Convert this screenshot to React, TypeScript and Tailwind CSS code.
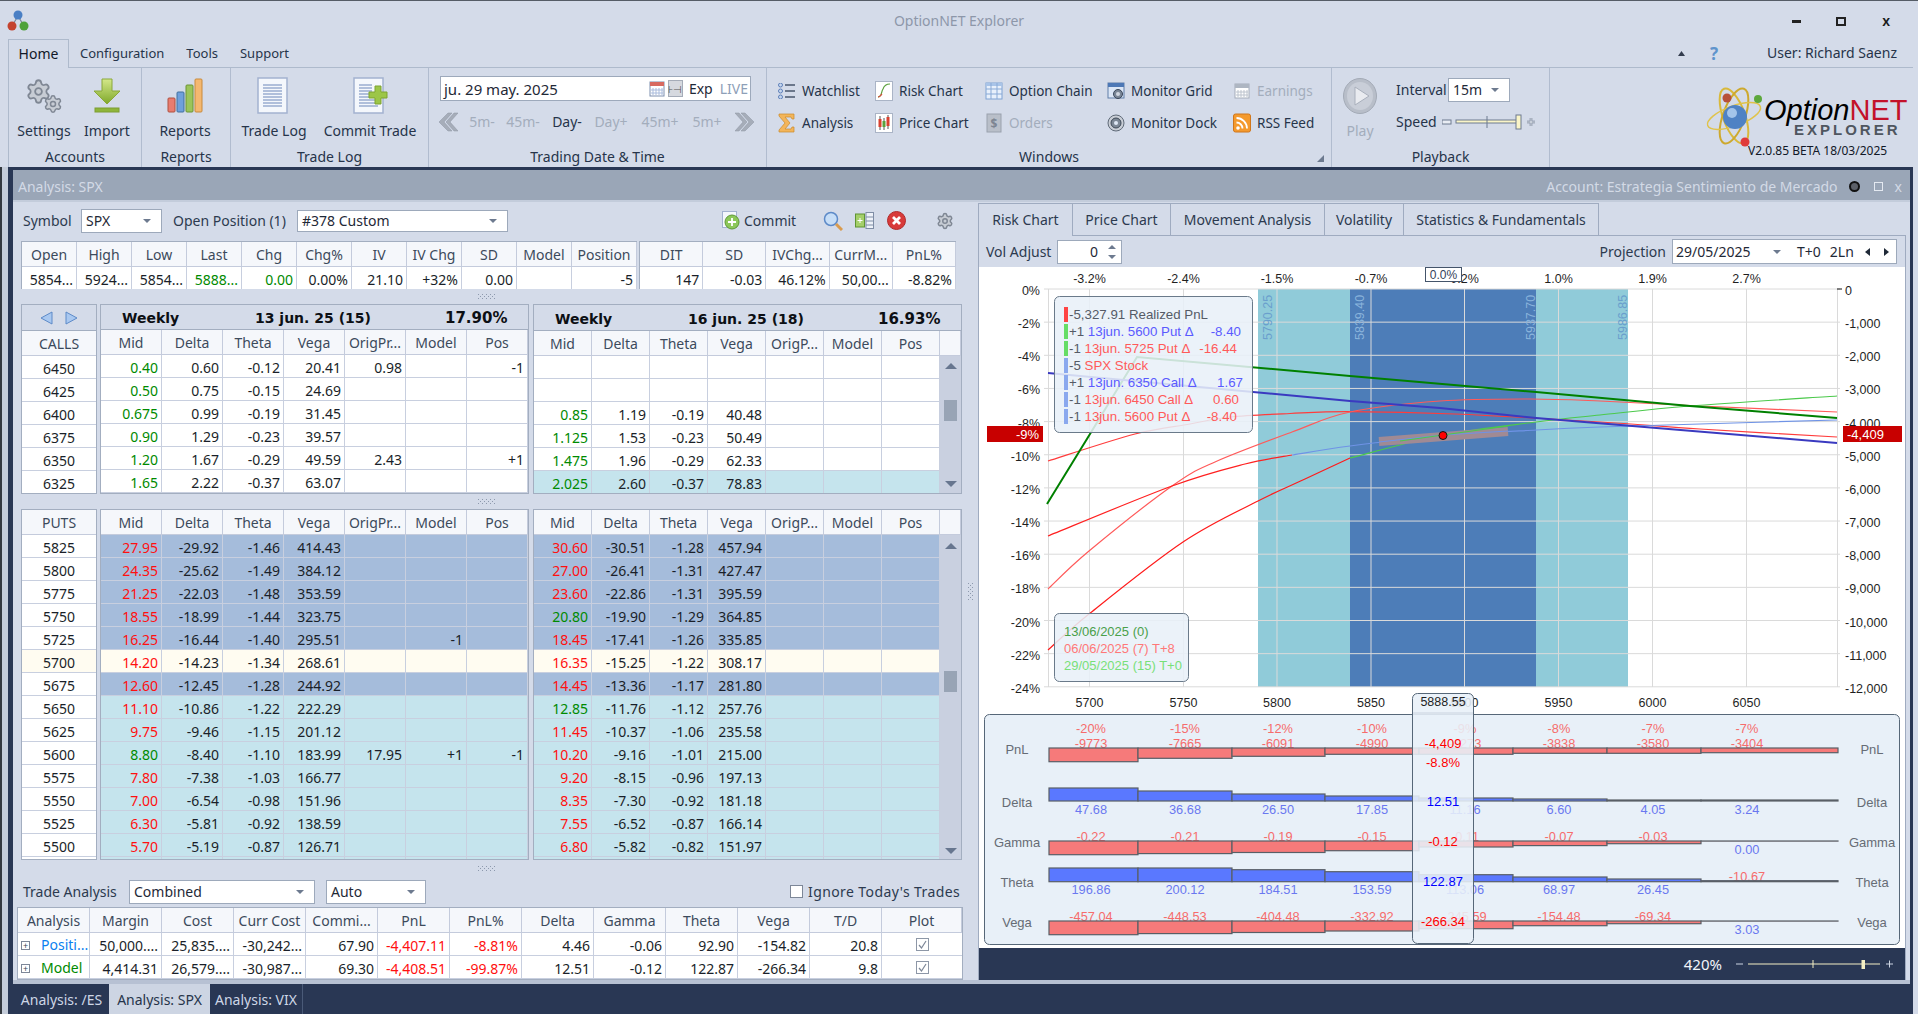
import type { ReactNode } from "react";
import { Settings } from "lucide-react";

const up = (
  <svg width="12" height="6" viewBox="0 0 12 6"><polygon points="6,0 12,6 0,6" fill="#67768f" /></svg>
);
const down = (
  <svg width="12" height="6" viewBox="0 0 12 6"><polygon points="0,0 12,0 6,6" fill="#67768f" /></svg>
);
const caret = (
  <svg width="8" height="4" viewBox="0 0 8 4"><polygon points="0,0 8,0 4,4" fill="#6d7a8f" /></svg>
);

function Combo({ className, text }: { className: string; text: string }) {
  return (
    <div className={`flex items-center justify-between bg-white border border-[#9da9bb] pl-1 pr-[10px] text-[#1f2937] ${className}`}>
      <span>{text}</span>
      {caret}
    </div>
  );
}

function Dots({ vertical }: { vertical?: boolean }) {
  const cells: ReactNode[] = [];
  for (let a = 0; a < 9; a++) {
    for (let b = 0; b < 3; b++) {
      if ((a + b) % 2 === 0) {
        cells.push(
          <rect key={`${a}-${b}`} x={vertical ? b * 2 : a * 2} y={vertical ? a * 2 : b * 2} width="1" height="1" fill="#8d99ad" />
        );
      }
    }
  }
  return (
    <svg width={vertical ? 5 : 17} height={vertical ? 17 : 5}>
      {cells}
    </svg>
  );
}

function Splitter({ className }: { className: string }) {
  return (
    <div className={`flex items-center justify-center pr-[8px] ${className}`}>
      <Dots />
    </div>
  );
}

// ---- ribbon icons ----
function ImportIcon() {
  return (
    <svg width="30" height="36" viewBox="0 0 30 36">
      <defs>
        <linearGradient id="gr1" x1="0" y1="0" x2="0" y2="1">
          <stop offset="0" stopColor="#d4e88a" />
          <stop offset="1" stopColor="#7fa82a" />
        </linearGradient>
      </defs>
      <polygon points="10,1 20,1 20,13 28,13 15,26 2,13 10,13" fill="url(#gr1)" stroke="#8aa83a" />
      <rect x="3" y="30" width="24" height="4" fill="#8fb53a" stroke="#7d9e32" />
    </svg>
  );
}
function ReportsIcon() {
  return (
    <svg width="36" height="36" viewBox="0 0 36 36">
      <rect x="1" y="20" width="7" height="14" rx="1" fill="#e87c70" stroke="#b0503f" />
      <rect x="10" y="14" width="7" height="20" rx="1" fill="#6fa0dc" stroke="#41709f" />
      <rect x="19" y="7" width="7" height="27" rx="1" fill="#9bc55a" stroke="#6c9434" />
      <rect x="28" y="1" width="7" height="33" rx="1" fill="#f4b870" stroke="#c98a3c" />
    </svg>
  );
}
function DocIcon({ plus }: { plus?: boolean }) {
  const lines = [8, 11, 14, 17, 20, 23, 26, 29];
  return (
    <svg width="36" height="38" viewBox="0 0 36 38">
      <rect x="2" y="1" width="29" height="35" fill="#f4f7fc" stroke="#a3b2d0" strokeWidth="1.5" />
      {lines.map((y) => (
        <line key={y} x1="7" y1={y} x2={plus && y < 20 ? 20 : 26} y2={y} stroke="#9aacd0" strokeWidth="1.5" />
      ))}
      {plus && <path d="M23 9h6v6h6v6h-6v6h-6v-6h-6v-6h6z" fill="#9cc648" stroke="#7da331" />}
    </svg>
  );
}
function CalendarIcon({ gray }: { gray?: boolean }) {
  return (
    <svg width="16" height="16" viewBox="0 0 16 16">
      <rect x="1" y="1" width="14" height="14" fill="#fff" stroke={gray ? "#a3acb9" : "#7c8fb0"} />
      <rect x="1" y="1" width="14" height="4" fill={gray ? "#aeb6c2" : "#d86a60"} />
      <path d="M4 7v7M7 7v7M10 7v7M13 7v7M2 9h12M2 12h12" stroke={gray ? "#bcc3cd" : "#a9bbdc"} />
    </svg>
  );
}
function NavChevrons({ right }: { right?: boolean }) {
  return (
    <svg width="20" height="20" viewBox="0 0 20 20">
      <g transform={right ? "translate(20,0) scale(-1,1)" : undefined} fill="#a6adb9" stroke="#8d95a3" strokeWidth="0.5">
        <polygon points="10,1 14,1 6,10 14,19 10,19 1,10" />
        <polygon points="16,1 20,1 12,10 20,19 16,19 8,10" />
      </g>
    </svg>
  );
}
function ListIcon() {
  return (
    <svg width="18" height="16" viewBox="0 0 18 16">
      {[2, 8, 14].map((y) => (
        <g key={y}>
          <circle cx="2.5" cy={y} r="2" fill="#c6d6ee" stroke="#5d7fb8" />
          <line x1="7" y1={y} x2="17" y2={y} stroke="#49566b" strokeWidth="1.5" />
        </g>
      ))}
    </svg>
  );
}
function RiskIcon() {
  return (
    <svg width="18" height="20" viewBox="0 0 18 20">
      <rect x="0.5" y="0.5" width="17" height="19" fill="#fff" stroke="#aab4c6" />
      <path d="M3 16c4 0 3-5 5-8 1-3 3-5 7-5" fill="none" stroke="#5aa03c" strokeWidth="1.2" />
      <path d="M3 16c2 0 3-2 4-3" fill="none" stroke="#d84c3c" strokeWidth="1.2" />
    </svg>
  );
}
function ChainIcon() {
  return (
    <svg width="18" height="18" viewBox="0 0 18 18">
      <rect x="1" y="1" width="16" height="16" fill="#e8f0fb" stroke="#7fa3d4" />
      <rect x="1" y="1" width="16" height="3" fill="#a9c4e8" />
      <path d="M6 1v16M12 1v16M1 7h16M1 12h16" stroke="#88a9d6" />
    </svg>
  );
}
function MonitorGridIcon() {
  return (
    <svg width="18" height="20" viewBox="0 0 18 20">
      <rect x="1" y="2" width="16" height="15" fill="#dbe6f6" stroke="#607fa8" />
      <rect x="1" y="2" width="16" height="4" fill="#4d78b6" />
      <circle cx="11" cy="13" r="4.5" fill="#7a8696" stroke="#39465a" />
      <circle cx="11" cy="13" r="2" fill="#cfd6e0" />
    </svg>
  );
}
function DockIcon() {
  return (
    <svg width="18" height="18" viewBox="0 0 18 18">
      <circle cx="9" cy="9" r="8" fill="#c9ced6" stroke="#5f6a78" />
      <circle cx="9" cy="9" r="5" fill="#7d8896" stroke="#3d4856" />
      <circle cx="9" cy="9" r="2" fill="#dfe8f5" />
    </svg>
  );
}
function SigmaIcon() {
  return (
    <svg width="18" height="20" viewBox="0 0 18 20">
      <path d="M1 1h15v5h-2l-1-2H7l5 6-5 6h6l1-2h2v5H1v-2l6-7-6-7z" fill="#f3b55a" stroke="#c98a2c" strokeWidth="0.7" />
    </svg>
  );
}
function CandleIcon() {
  return (
    <svg width="18" height="20" viewBox="0 0 18 20">
      <rect x="0.5" y="0.5" width="17" height="19" fill="#fff" stroke="#aab4c6" />
      <path d="M5 3v14M9 5v12M13 2v14" stroke="#555" />
      <rect x="3.5" y="6" width="3" height="8" fill="#d8402f" />
      <rect x="7.5" y="8" width="3" height="6" fill="#5aa03c" />
      <rect x="11.5" y="4" width="3" height="9" fill="#d8402f" />
    </svg>
  );
}
function OrdersIcon() {
  return (
    <svg width="18" height="20" viewBox="0 0 18 20">
      <rect x="2" y="1" width="14" height="18" fill="#b9bfc9" stroke="#9aa2ae" />
      <text x="9" y="15" textAnchor="middle" fontSize="12" fontWeight="700" fill="#7d8592">$</text>
    </svg>
  );
}
function RssIcon() {
  return (
    <svg width="18" height="20" viewBox="0 0 18 20">
      <rect x="0.5" y="1" width="17" height="18" rx="2" fill="#f49a2e" stroke="#d0761a" />
      <circle cx="5" cy="15" r="1.8" fill="#fff" />
      <path d="M3.5 9.5a6 6 0 0 1 6 6M3.5 5a10.500 10.500 0 0 1 10.500 10.500" fill="none" stroke="#fff" strokeWidth="1.8" />
    </svg>
  );
}
function PlayIcon() {
  return (
    <svg width="34" height="36" viewBox="0 0 34 36">
      <ellipse cx="17" cy="18" rx="16.500" ry="17.500" fill="#b8bec9" stroke="#a3aab6" />
      <ellipse cx="17" cy="18" rx="13" ry="14" fill="#c9ced8" />
      <polygon points="12,9 26,18 12,27" fill="#e9ebf0" stroke="#a9b0bc" />
    </svg>
  );
}
function Atom() {
  return (
    <svg width="62" height="64" viewBox="0 0 62 64">
      <ellipse cx="29" cy="32" rx="29" ry="11" transform="rotate(70 29 32)" fill="none" stroke="#d9b93a" strokeWidth="2" />
      <ellipse cx="29" cy="32" rx="29" ry="11" transform="rotate(110 29 32)" fill="none" stroke="#cda92e" strokeWidth="2" />
      <ellipse cx="29" cy="32" rx="28" ry="10" transform="rotate(-20 29 32)" fill="none" stroke="#e0c34a" strokeWidth="1.5" />
      <circle cx="30" cy="33" r="12" fill="#4f82c4" />
      <circle cx="27" cy="29" r="5" fill="#a3c4ea" />
      <circle cx="22" cy="14" r="4.500" fill="#b8503a" />
      <circle cx="53" cy="15" r="4" fill="#5da83c" />
      <circle cx="40" cy="58" r="4.500" fill="#e03a3a" />
    </svg>
  );
}

function BigButton({ icon, label, className }: { icon: ReactNode; label: string; className: string }) {
  return (
    <div className={`flex flex-col items-center ${className}`}>
      <div className="h-[37px] flex items-center justify-center">{icon}</div>
      <div className="mt-[8px] h-[18px] leading-[18px] text-[#26344a] whitespace-nowrap">{label}</div>
    </div>
  );
}

function Group({ label, className, children, corner }: { label: string; className: string; children: ReactNode; corner?: boolean }) {
  return (
    <div className={`flex flex-col border-r border-[#b1bccf] ${className}`}>
      <div className="h-[78px]">{children}</div>
      <div className="flex-1 flex items-center justify-center text-[#26344a] relative">
        {label}
        {corner && (
          <svg className="absolute right-[7px] bottom-[5px]" width="7" height="7" viewBox="0 0 7 7">
            <polygon points="7,0 7,7 0,7" fill="#6d7a8f" />
          </svg>
        )}
      </div>
    </div>
  );
}

function WinItem({ icon, label, gray }: { icon: ReactNode; label: string; gray?: boolean }) {
  return (
    <div className={`flex items-center gap-[6px] whitespace-nowrap text-[13.5px] ${gray ? "text-[#a3adbc]" : "text-[#26344a]"}`}>
      <span className="w-[18px] flex justify-center">{icon}</span>
      {label}
    </div>
  );
}

function TitleBar() {
  return (
    <div className="h-[39px] grid grid-cols-[1fr_auto_1fr] items-start border-t border-[#555c66]">
      <svg className="ml-[7px] mt-[9px]" width="22" height="22" viewBox="0 0 22 22">
        <path d="M11 6L5 16M11 6l6 10" stroke="#7b8696" strokeWidth="1.2" />
        <circle cx="11" cy="5" r="4.500" fill="#4a7fc4" />
        <circle cx="5" cy="16" r="4.500" fill="#c4432f" />
        <circle cx="17" cy="16" r="4.500" fill="#4fa23a" />
      </svg>
      <div className="text-[#8d97a9] mt-[10px] leading-[20px]">OptionNET Explorer</div>
      <div className="flex justify-end items-center pr-[28px] mt-[14px] text-[#1a1a1a]">
        <div className="w-[9px] h-[3px] bg-[#222]" />
        <div className="ml-[35px] w-[10px] h-[9px] border-[2px] border-[#222]" />
        <div className="ml-[36px] leading-[12px] font-semibold">x</div>
      </div>
    </div>
  );
}

function TabStrip() {
  return (
    <div className="h-[29px] mr-[5px] flex items-end pr-[16px] border-b border-[#aebacc] text-[#26344a]">
      <div className="h-[29px] w-[60px] -mb-px bg-[#d4dbe9] border-t border-r border-[#aebacc] flex items-center justify-center text-[#111827]">Home</div>
      <div className="h-[28px] flex items-center ml-[11px] text-[13px]">Configuration</div>
      <div className="h-[28px] flex items-center ml-[22px] text-[13px]">Tools</div>
      <div className="h-[28px] flex items-center ml-[22px] text-[13px]">Support</div>
      <div className="flex-1" />
      <div className="h-[28px] flex items-center gap-[25px]">
        <svg width="7" height="5" viewBox="0 0 7 5"><polygon points="3.500,0 7,5 0,5" fill="#333c4e" /></svg>
        <span className="text-[#5f94cc] font-bold text-[17px] leading-none">?</span>
        <span className="ml-[24px]">User: Richard Saenz</span>
      </div>
    </div>
  );
}

function Ribbon() {
  return (
    <div className="h-[99px] flex">
      <Group label="Accounts" className="w-[133px]">
        <div className="flex pt-[9px] pl-[4px]">
          <BigButton
            className="w-[62px]"
            label="Settings"
            icon={
              <span className="relative w-[38px] h-[36px]">
                <Settings className="absolute left-0 top-0" size={27} color="#7f8794" fill="#c7ccd4" strokeWidth={1.6} />
                <Settings className="absolute right-0 bottom-0" size={20} color="#7f8794" fill="#c7ccd4" strokeWidth={1.8} />
              </span>
            }
          />
          <BigButton className="w-[64px]" label="Import" icon={<ImportIcon />} />
        </div>
      </Group>
      <Group label="Reports" className="w-[89px]">
        <div className="flex pt-[9px] pl-[13px]">
          <BigButton className="w-[60px]" label="Reports" icon={<ReportsIcon />} />
        </div>
      </Group>
      <Group label="Trade Log" className="w-[198px]">
        <div className="flex pt-[9px] pl-[5px]">
          <BigButton className="w-[76px]" label="Trade Log" icon={<DocIcon />} />
          <BigButton className="w-[116px]" label="Commit Trade" icon={<DocIcon plus />} />
        </div>
      </Group>
      <Group label="Trading Date & Time" className="w-[338px]">
        <div className="pt-[8px] pl-[11px]">
          <div className="w-[311px] h-[25px] bg-white border border-[#9da9bb] flex items-center pl-[3px] text-[#1f2937]">
            <span className="text-[15px]">ju. 29 may. 2025</span>
            <span className="ml-auto"><CalendarIcon /></span>
            <span className="ml-[3px] w-[15px] h-[17px] bg-[#d6d9df] border border-[#a5acb8] flex items-center justify-center text-[10px] leading-none text-[#555]">⊦⊣</span>
            <span className="ml-[6px]">Exp</span>
            <span className="ml-[7px] mr-[2px] text-[#8ea0b8]">LIVE</span>
          </div>
          <div className="flex items-center h-[21px] mt-[10px] -ml-[2px] text-[#a3adbc]">
            <NavChevrons />
            <span className="w-[48px] flex justify-center">5m-</span>
            <span className="w-[34px] flex justify-center">45m-</span>
            <span className="w-[54px] flex justify-center text-[#26344a]">Day-</span>
            <span className="w-[34px] flex justify-center whitespace-nowrap">Day+</span>
            <span className="w-[64px] flex justify-center">45m+</span>
            <span className="w-[30px] flex justify-center">5m+</span>
            <span className="ml-[13px]"><NavChevrons right /></span>
          </div>
        </div>
      </Group>
      <Group label="Windows" className="w-[565px]" corner>
        <div className="grid grid-cols-[97px_110px_122px_126px_1fr] auto-rows-[32px] pl-[11px] pt-[7px]">
          <WinItem icon={<ListIcon />} label="Watchlist" />
          <WinItem icon={<RiskIcon />} label="Risk Chart" />
          <WinItem icon={<ChainIcon />} label="Option Chain" />
          <WinItem icon={<MonitorGridIcon />} label="Monitor Grid" />
          <WinItem icon={<CalendarIcon gray />} label="Earnings" gray />
          <WinItem icon={<SigmaIcon />} label="Analysis" />
          <WinItem icon={<CandleIcon />} label="Price Chart" />
          <WinItem icon={<OrdersIcon />} label="Orders" gray />
          <WinItem icon={<DockIcon />} label="Monitor Dock" />
          <WinItem icon={<RssIcon />} label="RSS Feed" />
        </div>
      </Group>
      <Group label="Playback" className="w-[218px]">
        <div className="flex pt-[10px] pl-[11px]">
          <div className="flex flex-col items-center w-[34px]">
            <PlayIcon />
            <span className="mt-[7px] text-[#a3adbc]">Play</span>
          </div>
          <div className="ml-[19px] text-[#26344a]">
            <div className="flex items-center h-[24px]">
              <span className="w-[52px]">Interval</span>
              <Combo className="w-[62px] h-[24px]" text="15m" />
            </div>
            <div className="flex items-center h-[24px] mt-[8px]">
              <span className="w-[46px]">Speed</span>
              <svg width="94" height="16" viewBox="0 0 94 16">
                <rect x="0" y="6" width="9" height="4" fill="#e9edf4" stroke="#6d7a8f" />
                <rect x="14" y="6" width="62" height="3" fill="#faf5c8" stroke="#6d7a8f" />
                <path d="M45 2v12" stroke="#6d7a8f" />
                <rect x="74" y="1" width="5" height="14" fill="#faf5c8" stroke="#6d7a8f" />
                <path d="M85 8h8M89 4v8" stroke="#6d7a8f" strokeWidth="2.500" />
                <path d="M85 8h8M89 4v8" stroke="#e9edf4" />
              </svg>
            </div>
          </div>
        </div>
      </Group>
      <div className="flex-1 flex pl-[155px] pt-[16px]">
        <Atom />
        <div className="-ml-[3px] flex flex-col">
          <div className="font-['Liberation_Sans',sans-serif] italic text-[29px] leading-[30px] mt-[11px] text-black whitespace-nowrap">
            Option<span className="not-italic text-[#c3122a]">NET</span>
          </div>
          <div className="font-['Liberation_Sans',sans-serif] font-bold text-[#4f5660] text-[15px] leading-[11px] mt-[-1px] ml-[30px] tracking-[3px] whitespace-nowrap">EXPLORER</div>
          <div className="text-[12px] leading-[14px] mt-[9px] -ml-[16px] text-[#111827] whitespace-nowrap">V2.0.85 BETA 18/03/2025</div>
        </div>
      </div>
    </div>
  );
}

// ---- quote strip ----
const quoteHead = ["Open", "High", "Low", "Last", "Chg", "Chg%", "IV", "IV Chg", "SD", "Model", "Position"];
const quoteVals = ["5854...", "5924...", "5854...", "5888...", "0.00", "0.00%", "21.10", "+32%", "0.00", "", "-5"];
const posHead = ["DIT", "SD", "IVChg...", "CurrM...", "PnL%"];
const posVals = ["147", "-0.03", "46.12%", "50,00...", "-8.82%"];

const headCell = "bg-[#f5f7fb] border-r border-b border-[#c4cbdc] pt-[1px] flex items-center justify-center text-[#3c4a5c] whitespace-nowrap overflow-hidden";
const dataCell = "border-r border-b border-[#c8cfdf] pr-[3px] text-right leading-[25px] text-[#1a1f29] whitespace-nowrap overflow-hidden";

function QuoteStrip() {
  return (
    <div className="flex h-[48px] overflow-hidden pl-[7px] mt-[2px] gap-[2px]">
      <div className="border-t border-l border-[#a3aec0] grid grid-cols-[repeat(10,55px)_65px] grid-rows-[25px_23px] bg-white">
        {quoteHead.map((h) => (
          <div key={h} className={headCell}>{h}</div>
        ))}
        {quoteVals.map((v, i) => (
          <div key={i} className={`${dataCell} ${i === 3 || i === 4 ? "text-[#008a00]" : ""}`}>{v}</div>
        ))}
      </div>
      <div className="border-t border-l border-[#a3aec0] grid grid-cols-[repeat(5,63.200px)] grid-rows-[25px_23px] bg-white">
        {posHead.map((h) => (
          <div key={h} className={headCell}>{h}</div>
        ))}
        {posVals.map((v, i) => (
          <div key={i} className={dataCell}>{v}</div>
        ))}
      </div>
    </div>
  );
}

// ---- option chain ----
const chainHead = ["Mid", "Delta", "Theta", "Vega", "OrigPr...", "Model", "Pos"];
const chainHead2 = ["Mid", "Delta", "Theta", "Vega", "OrigP...", "Model", "Pos"];
const green = "text-[#008a00]";
const red = "text-[#ff1010]";
const blueRow = "bg-[#a5bcdb]";
const yellowRow = "bg-[#fffcf1]";
const tealRow = "bg-[#c5e4ed]";

type Row = { mid: string; c: string; rest: string[]; bg: string };
const row = (mid: string, c: string, bg: string, ...rest: string[]): Row => ({ mid, c, bg, rest });

const callStrikes = ["6450", "6425", "6400", "6375", "6350", "6325"];
const callsA: Row[] = [
  row("0.40", green, "", "0.60", "-0.12", "20.41", "0.98", "", "-1"),
  row("0.50", green, "", "0.75", "-0.15", "24.69"),
  row("0.675", green, "", "0.99", "-0.19", "31.45"),
  row("0.90", green, "", "1.29", "-0.23", "39.57"),
  row("1.20", green, "", "1.67", "-0.29", "49.59", "2.43", "", "+1"),
  row("1.65", green, "", "2.22", "-0.37", "63.07"),
];
const callsB: Row[] = [
  row("", "", ""),
  row("", "", ""),
  row("0.85", green, "", "1.19", "-0.19", "40.48"),
  row("1.125", green, "", "1.53", "-0.23", "50.49"),
  row("1.475", green, "", "1.96", "-0.29", "62.33"),
  row("2.025", green, tealRow, "2.60", "-0.37", "78.83"),
];
const putStrikes = ["5825", "5800", "5775", "5750", "5725", "5700", "5675", "5650", "5625", "5600", "5575", "5550", "5525", "5500", ""];
const putsA: Row[] = [
  row("27.95", red, blueRow, "-29.92", "-1.46", "414.43"),
  row("24.35", red, blueRow, "-25.62", "-1.49", "384.12"),
  row("21.25", red, blueRow, "-22.03", "-1.48", "353.59"),
  row("18.55", red, blueRow, "-18.99", "-1.44", "323.75"),
  row("16.25", red, blueRow, "-16.44", "-1.40", "295.51", "", "-1"),
  row("14.20", red, yellowRow, "-14.23", "-1.34", "268.61"),
  row("12.60", red, blueRow, "-12.45", "-1.28", "244.92"),
  row("11.10", red, tealRow, "-10.86", "-1.22", "222.29"),
  row("9.75", red, tealRow, "-9.46", "-1.15", "201.12"),
  row("8.80", green, tealRow, "-8.40", "-1.10", "183.99", "17.95", "+1", "-1"),
  row("7.80", red, tealRow, "-7.38", "-1.03", "166.77"),
  row("7.00", red, tealRow, "-6.54", "-0.98", "151.96"),
  row("6.30", red, tealRow, "-5.81", "-0.92", "138.59"),
  row("5.70", red, tealRow, "-5.19", "-0.87", "126.71"),
  row("", "", tealRow),
];
const putsB: Row[] = [
  row("30.60", red, blueRow, "-30.51", "-1.28", "457.94"),
  row("27.00", red, blueRow, "-26.41", "-1.31", "427.47"),
  row("23.60", red, blueRow, "-22.86", "-1.31", "395.59"),
  row("20.80", green, blueRow, "-19.90", "-1.29", "364.85"),
  row("18.45", red, blueRow, "-17.41", "-1.26", "335.85"),
  row("16.35", red, yellowRow, "-15.25", "-1.22", "308.17"),
  row("14.45", red, blueRow, "-13.36", "-1.17", "281.80"),
  row("12.85", green, tealRow, "-11.76", "-1.12", "257.76"),
  row("11.45", red, tealRow, "-10.37", "-1.06", "235.58"),
  row("10.20", red, tealRow, "-9.16", "-1.01", "215.00"),
  row("9.20", red, tealRow, "-8.15", "-0.96", "197.13"),
  row("8.35", red, tealRow, "-7.30", "-0.92", "181.18"),
  row("7.55", red, tealRow, "-6.52", "-0.87", "166.14"),
  row("6.80", red, tealRow, "-5.82", "-0.82", "151.97"),
  row("", "", tealRow),
];

function RowCells({ rows }: { rows: Row[] }) {
  return (
    <>
      {rows.map((r, i) => {
        const cells = [r.rest[0], r.rest[1], r.rest[2], r.rest[3], r.rest[4], r.rest[5]];
        return (
          <div key={i} className="contents">
            <div className={`${dataCell} ${r.bg} ${r.c}`}>{r.mid}</div>
            {cells.map((v, j) => (
              <div key={j} className={`${dataCell} ${r.bg}`}>{v}</div>
            ))}
          </div>
        );
      })}
    </>
  );
}

function GroupHead({ date, iv }: { date: string; iv: string }) {
  return (
    <div className="h-[26px] flex items-center bg-[#d4dbe9] border-b border-[#a3aec0] pt-[2px] font-['DejaVu_Sans',sans-serif] font-bold text-[14px] text-[#0c0f14] pl-[21px] whitespace-nowrap">
      <span className="w-[133px]">Weekly</span>
      <span className="w-[190px]">{date}</span>
      <span className="text-[15px]">{iv}</span>
    </div>
  );
}

function ScrollBar({ thumbTop, thumbGap, top }: { thumbTop: string; thumbGap: string; top: string }) {
  return (
    <div className={`w-[21px] bg-[#c9d0e0] flex flex-col items-center ${top}`}>
      {up}
      <div className={`w-[13px] h-[21px] bg-[#98a4b5] shrink-0 ${thumbTop}`} />
      <div className={thumbGap}>{down}</div>
    </div>
  );
}

function StrikeCol({ strikes, head, title, heightClass }: { strikes: string[]; head: string; title?: boolean; heightClass: string }) {
  return (
    <div className={`w-[76px] border border-[#a3aec0] bg-white flex flex-col overflow-hidden ${heightClass}`}>
      {title && (
        <div className="h-[26px] shrink-0 flex items-center justify-center gap-[12px] bg-[#d4dbe9] border-b border-[#a3aec0]">
          <svg width="13" height="14" viewBox="0 0 13 14"><polygon points="12,1 12,13 1,7" fill="#a9c8f0" stroke="#5d8ac8" /></svg>
          <svg width="13" height="14" viewBox="0 0 13 14"><polygon points="1,1 1,13 12,7" fill="#a9c8f0" stroke="#5d8ac8" /></svg>
        </div>
      )}
      <div className={`shrink-0 h-[25px] ${headCell} !border-r-0`}>{head}</div>
      {strikes.map((s, i) => (
        <div key={i} className={`shrink-0 h-[23px] border-b border-[#c8cfdf] text-center leading-[25px] text-[#1a1f29] ${s === "5700" ? "bg-[#fffcf1]" : ""}`}>{s}</div>
      ))}
    </div>
  );
}

function ChainTable({ rowsA, rowsB, strikes, head, dates, bar }: {
  rowsA: Row[];
  rowsB: Row[];
  strikes: string[];
  head: string;
  dates?: boolean;
  bar: ReactNode;
}) {
  const hc = dates ? "h-[190px]" : "h-[351px]";
  return (
    <div className="flex pl-[7px]">
      <StrikeCol strikes={strikes} head={head} title={dates} heightClass={hc} />
      <div className={`ml-[3px] w-[429px] border border-[#a3aec0] bg-white flex flex-col overflow-hidden ${hc}`}>
        {dates && <GroupHead date="13 jun. 25 (15)" iv="17.90%" />}
        <div className="grid grid-cols-[repeat(7,61px)] grid-rows-[25px]">
          {chainHead.map((h) => (
            <div key={h} className={headCell}>{h}</div>
          ))}
        </div>
        <div className="grid grid-cols-[repeat(7,61px)] auto-rows-[23px]">
          <RowCells rows={rowsA} />
        </div>
      </div>
      <div className={`ml-[4px] w-[429px] border border-[#a3aec0] bg-white flex flex-col overflow-hidden ${hc}`}>
        {dates && <GroupHead date="16 jun. 25 (18)" iv="16.93%" />}
        <div className="grid grid-cols-[repeat(7,58px)_21px] grid-rows-[25px] shrink-0">
          {chainHead2.map((h) => (
            <div key={h} className={headCell}>{h}</div>
          ))}
          <div className={headCell} />
        </div>
        <div className="flex flex-1 min-h-0">
          <div className="grid grid-cols-[repeat(7,58px)] auto-rows-[23px] w-[406px]">
            <RowCells rows={rowsB} />
          </div>
          {bar}
        </div>
      </div>
    </div>
  );
}

// ---- trade analysis ----
const taHead = ["Analysis", "Margin", "Cost", "Curr Cost", "Commi...", "PnL", "PnL%", "Delta", "Gamma", "Theta", "Vega", "T/D", "Plot"];
const taRows = [
  { name: "Positi...", color: "text-[#0a7ff0]", v: ["50,000....", "25,835....", "-30,242...", "67.90", "-4,407.11", "-8.81%", "4.46", "-0.06", "92.90", "-154.82", "20.8"] },
  { name: "Model", color: "text-[#008a00]", v: ["4,414.31", "26,579....", "-30,987...", "69.30", "-4,408.51", "-99.87%", "12.51", "-0.12", "122.87", "-266.34", "9.8"] },
];

function TradeAnalysis() {
  return (
    <>
      <div className="h-[31px] flex items-center pl-[9px] text-[#2c3a4f]">
        <span className="w-[106px]">Trade Analysis</span>
        <Combo className="w-[186px] h-[24px]" text="Combined" />
        <Combo className="ml-[11px] w-[100px] h-[24px]" text="Auto" />
        <div className="ml-[364px] w-[13px] h-[13px] bg-white border border-[#7d8798]" />
        <span className="ml-[5px] tracking-[0.4px]">Ignore Today's Trades</span>
      </div>
      <div className="ml-[3px] w-[946px] h-[73px] border border-[#a3aec0] bg-white grid grid-cols-[repeat(12,72px)_80px] grid-rows-[25px_23px_23px] overflow-hidden">
        {taHead.map((h) => (
          <div key={h} className={headCell}>{h}</div>
        ))}
        {taRows.map((r) => (
          <div key={r.name} className="contents">
            <div className={`flex items-center border-r border-b border-[#c8cfdf] pl-[3px] pt-[2px] ${r.color}`}>
              <span className="w-[9px] h-[9px] border border-[#7d8798] flex items-center justify-center text-[9px] leading-none text-[#39465a] mr-[11px]">+</span>
              {r.name}
            </div>
            {r.v.map((v, i) => (
              <div key={i} className={`${dataCell} ${i === 4 || i === 5 ? "text-[#ff1010]" : ""}`}>{v}</div>
            ))}
            <div className="border-b border-[#c8cfdf] flex items-center justify-center">
              <div className="w-[13px] h-[13px] border border-[#8d97a7] flex items-center justify-center">
                <svg width="9" height="9" viewBox="0 0 9 9"><path d="M1 5l2.500 3L8 1" fill="none" stroke="#7d8798" strokeWidth="1.2" /></svg>
              </div>
            </div>
          </div>
        ))}
      </div>
    </>
  );
}

// ---- chart ----
const yOf = (k: number) => 290 + 33.15 * k;
const xLines = [1089.5, 1183.5, 1277, 1371, 1464.5, 1558.5, 1652.5, 1746.5];
const pctTop = ["-3.2%", "-2.4%", "-1.5%", "-0.7%", "0.2%", "1.0%", "1.9%", "2.7%"];
const xBottom = ["5700", "5750", "5800", "5850", "5900", "5950", "6000", "6050"];
const pts = (p: number[][]) => p.map((q) => q.join(",")).join(" ");

// catmull-rom through the points, the payoff curves have no corners
const smooth = (p: number[][]) => {
  let d = `M${p[0][0]} ${p[0][1]}`;
  for (let i = 0; i < p.length - 1; i++) {
    const p0 = p[i - 1] || p[i];
    const p1 = p[i];
    const p2 = p[i + 1];
    const p3 = p[i + 2] || p2;
    const c1x = p1[0] + (p2[0] - p0[0]) / 6;
    const c1y = p1[1] + (p2[1] - p0[1]) / 6;
    const c2x = p2[0] - (p3[0] - p1[0]) / 6;
    const c2y = p2[1] - (p3[1] - p1[1]) / 6;
    d += ` C${c1x} ${c1y} ${c2x} ${c2y} ${p2[0]} ${p2[1]}`;
  }
  return d;
};

const barX = [1049, 1138, 1232, 1325, 1419, 1513, 1607, 1701, 1838];
const mids = [1091, 1185, 1278, 1372, 1465, 1559, 1653, 1747];
const pink = "#f67a7a";
const blue = "#5a78ff";
const stats: { name: string; labelY: number; base: number; ends: number[]; fill: string }[] = [
  { name: "PnL", labelY: 755, base: 749, ends: [762.7, 759.3, 757.3, 755.3, 755.3, 754.3, 754.3, 753.7], fill: pink },
  { name: "Delta", labelY: 808, base: 802, ends: [789, 792, 795, 797, 799, 800, 801, 801], fill: blue },
  { name: "Gamma", labelY: 848, base: 842, ends: [855.7, 854.6, 853.5, 851.7, 848, 846.6, 844.7, 842.1], fill: pink },
  { name: "Theta", labelY: 888, base: 882.7, ends: [869, 869, 870.7, 872.7, 875.7, 878, 880, 881.7], fill: blue },
  { name: "Vega", labelY: 928, base: 922, ends: [935.7, 934.6, 933.5, 932, 929.7, 926.7, 924.7, 922.1], fill: pink },
];
const redText = "#f66c6c";
const blueText = "#6a78f0";
const statTexts: { y: number; c: string; v: string[] }[] = [
  { y: 734, c: redText, v: ["-20%", "-15%", "-12%", "-10%", "-9%", "-8%", "-7%", "-7%"] },
  { y: 749, c: redText, v: ["-9773", "-7665", "-6091", "-4990", "-4273", "-3838", "-3580", "-3404"] },
  { y: 815, c: blueText, v: ["47.68", "36.68", "26.50", "17.85", "11.16", "6.60", "4.05", "3.24"] },
  { y: 842, c: redText, v: ["-0.22", "-0.21", "-0.19", "-0.15", "-0.11", "-0.07", "-0.03", ""] },
  { y: 855, c: blueText, v: ["", "", "", "", "", "", "", "0.00"] },
  { y: 895, c: blueText, v: ["196.86", "200.12", "184.51", "153.59", "113.06", "68.97", "26.45", ""] },
  { y: 882, c: redText, v: ["", "", "", "", "", "", "", "-10.67"] },
  { y: 922, c: redText, v: ["-457.04", "-448.53", "-404.48", "-332.92", "-245.59", "-154.48", "-69.34", ""] },
  { y: 935, c: blueText, v: ["", "", "", "", "", "", "", "3.03"] },
];
const legend = [
  { mark: "#ff4444", pre: "-5,327.91 Realized PnL", txt: "", c: "#555b66", d: "", dx: 0 },
  { mark: "#66dd66", pre: "+1 ", txt: "13jun. 5600 Put Δ", c: "#5a5aff", d: "-8.40", dx: 1241 },
  { mark: "#66dd66", pre: "-1 ", txt: "13jun. 5725 Put Δ", c: "#ff5a5a", d: "-16.44", dx: 1237 },
  { mark: "#8aa8ee", pre: "-5 ", txt: "SPX Stock", c: "#ff5a5a", d: "", dx: 0 },
  { mark: "#8aa8ee", pre: "+1 ", txt: "13jun. 6350 Call Δ", c: "#5a5aff", d: "1.67", dx: 1243 },
  { mark: "#8aa8ee", pre: "-1 ", txt: "13jun. 6450 Call Δ", c: "#ff5a5a", d: "0.60", dx: 1239 },
  { mark: "#8aa8ee", pre: "-1 ", txt: "13jun. 5600 Put Δ", c: "#ff5a5a", d: "-8.40", dx: 1237 },
];

function RiskChart() {
  return (
    <svg className="block shrink-0 bg-white font-['Liberation_Sans',sans-serif]" width="926" height="681" viewBox="979 268 926 681">
      <rect x="1258" y="290" width="370" height="398" fill="#90cbd9" />
      <rect x="1350" y="290" width="186" height="398" fill="#4d7db8" />
      {xLines.map((x) => (
        <line key={x} x1={x} y1="290" x2={x} y2="688" stroke="#dadada" />
      ))}
      <line x1="1837.500" y1="290" x2="1837.500" y2="688" stroke="#dadada" />
      <line x1="1048.500" y1="290" x2="1048.500" y2="688" stroke="#dadada" />
      {Array.from({ length: 13 }, (_, k) => (
        <g key={k}>
          <line x1="1044" y1={yOf(k)} x2="1840" y2={yOf(k)} stroke="#dadada" />
          <text x="1040" y={yOf(k) + 6} textAnchor="end" fontSize="12.500" fill="#1f1f1f">{`${k === 0 ? "" : "-"}${k * 2}%`}</text>
          <text x="1845" y={yOf(k) + 6} fontSize="12.500" fill="#1f1f1f">{k === 0 ? "0" : `-${k},000`}</text>
        </g>
      ))}
      <line x1="1837" y1="290" x2="1842" y2="290" stroke="#111" />
      {xLines.map((x, i) => (
        <g key={x}>
          <text x={x} y="284" textAnchor="middle" fontSize="12.500" fill="#1f1f1f">{pctTop[i]}</text>
          <text x={x} y="708" textAnchor="middle" fontSize="12.500" fill="#1f1f1f">{xBottom[i]}</text>
        </g>
      ))}
      <rect x="1425.500" y="268.500" width="36" height="14" fill="#fff" stroke="#44546a" />
      <text x="1443.500" y="280" textAnchor="middle" fontSize="12" fill="#33415a">0.0%</text>

      {[["5790.25", 1272, "#6a9fcd"], ["5839.40", 1364, "#8ab4dc"], ["5937.70", 1535, "#8ab4dc"], ["5986.85", 1627, "#6a9fcd"]].map(([t, x, c]) => (
        <text key={t as string} x={x} y="341" fontSize="12.500" fill={c as string} transform={`rotate(-90 ${x} 341)`}>{t}</text>
      ))}

      <path fill="none" stroke="#ff3c3c" strokeWidth="1.2" d={smooth([[1048, 462], [1135, 435], [1190, 425], [1230, 418], [1290, 414.5], [1350, 412.7], [1455, 415], [1600, 423], [1700, 430], [1837, 438]])} />
      <path fill="none" stroke="#ff5a5a" strokeWidth="1.2" d={smooth([[1048, 590], [1089, 552], [1172, 487], [1215, 463], [1292, 433], [1350, 413], [1440, 402], [1530, 400], [1600, 402], [1700, 407], [1837, 413]])} />
      <path fill="none" stroke="#ff2020" strokeWidth="1.2" d={smooth([[1048, 537], [1172, 487], [1245, 465], [1292, 456]])} />
      <path fill="none" stroke="#6f93e6" strokeWidth="1.2" d={smooth([[1292, 456], [1350, 447], [1440, 437], [1536, 431], [1600, 428], [1700, 425], [1837, 421]])} />
      <path fill="none" stroke="#ff1a1a" strokeWidth="1.2" d={smooth([[1048, 651], [1089, 615], [1183, 543], [1258, 502], [1305, 480], [1350, 459]])} />
      <path fill="none" stroke="#4cc94c" strokeWidth="1.2" d={smooth([[1350, 459], [1443, 436], [1536, 423], [1600, 416], [1690, 407], [1837, 397]])} />
      <polyline fill="none" stroke="#008000" strokeWidth="2" points={pts([[1047, 505], [1090, 435], [1137, 358], [1350, 377], [1536, 393], [1690, 407], [1837, 419]])} />
      <polyline fill="none" stroke="#3a3ac0" strokeWidth="2" points={pts([[1048, 374], [1350, 402], [1440, 409], [1536, 419], [1837, 444]])} />
      <line x1="1379" y1="442.500" x2="1508" y2="432.500" stroke="#a08a94" strokeWidth="9" />
      <polyline fill="none" stroke="#6f93e6" strokeWidth="1.2" points={pts([[1379, 443], [1443, 436], [1508, 432]])} />
      <polyline fill="none" stroke="#4cc94c" strokeWidth="1.2" points={pts([[1400, 442], [1443, 436], [1508, 427]])} />
      <circle cx="1443" cy="436.500" r="4" fill="#ff0000" stroke="#111" />

      <rect x="987" y="427" width="56" height="16" fill="#c80000" />
      <text x="1039" y="440" textAnchor="end" fontSize="13" fill="#fff">-9%</text>
      <rect x="1843" y="427" width="59" height="16" fill="#c80000" />
      <text x="1847" y="440" fontSize="13" fill="#fff">-4,409</text>

      <rect x="1054.500" y="297.500" width="198" height="136" rx="5" fill="#e8f0f8" fillOpacity="0.87" stroke="#6a7a8a" />
      {legend.map((l, i) => (
        <g key={i}>
          <rect x="1064" y={308 + i * 17} width="4" height="15" fill={l.mark} />
          <text x="1069" y={320 + i * 17} fontSize="13.300" fill="#555b66">
            {l.pre}
            <tspan fill={l.c}>{l.txt}</tspan>
          </text>
          {l.d && <text x={l.dx} y={320 + i * 17} textAnchor="end" fontSize="13.300" fill={l.c}>{l.d}</text>}
        </g>
      ))}
      <rect x="1054.500" y="614.500" width="134" height="68" rx="5" fill="#e8f0f8" fillOpacity="0.87" stroke="#6a7a8a" />
      <text x="1064" y="637" fontSize="13" fill="#4aa04a">13/06/2025 (0)</text>
      <text x="1064" y="654" fontSize="13" fill="#ff7878">06/06/2025 (7) T+8</text>
      <text x="1064" y="671" fontSize="13" fill="#78e078">29/05/2025 (15) T+0</text>

      <rect x="984.500" y="715.500" width="915" height="230" rx="5" fill="#e8f0f8" stroke="#566778" />
      {statTexts.map((s) =>
        s.v.map((v, i) => (
          <text key={`${s.y}-${i}`} x={mids[i]} y={s.y} textAnchor="middle" fontSize="12.800" fill={s.c}>{v}</text>
        ))
      )}
      {stats.map((s) => (
        <g key={s.name}>
          <text x="1017" y={s.labelY} textAnchor="middle" fontSize="13" fill="#666c75">{s.name}</text>
          <text x="1872" y={s.labelY} textAnchor="middle" fontSize="13" fill="#666c75">{s.name}</text>
          {s.ends.map((e, i) => (
            <rect
              key={i}
              x={barX[i]}
              y={Math.min(e, s.base)}
              width={barX[i + 1] - barX[i]}
              height={Math.abs(e - s.base)}
              fill={s.fill}
              stroke="#595f66"
              strokeWidth="1.200"
            />
          ))}
        </g>
      ))}

      <rect x="1412.500" y="694.500" width="61" height="250" rx="5" fill="#e8f0f8" fillOpacity="0.88" stroke="#566778" />
      <line x1="1413" y1="714" x2="1473" y2="714" stroke="#c9d2de" />
      <text x="1443" y="707" textAnchor="middle" fontSize="12.500" fill="#1f1f1f">5888.55</text>
      <text x="1443" y="749" textAnchor="middle" fontSize="13" fill="#ff0000">-4,409</text>
      <text x="1443" y="768" textAnchor="middle" fontSize="13" fill="#ff0000">-8.8%</text>
      <text x="1443" y="807" textAnchor="middle" fontSize="13" fill="#0000ff">12.51</text>
      <text x="1443" y="847" textAnchor="middle" fontSize="13" fill="#ff0000">-0.12</text>
      <text x="1443" y="887" textAnchor="middle" fontSize="13" fill="#0000ff">122.87</text>
      <text x="1443" y="927" textAnchor="middle" fontSize="13" fill="#ff0000">-266.34</text>
    </svg>
  );
}

function RightPane() {
  const tab = "h-[33px] flex items-center justify-center border-t border-r border-b border-[#9fabc0] text-[#2c3a4f] whitespace-nowrap";
  return (
    <div className="ml-[4px] w-[928px] flex flex-col mt-[1px]">
      <div className="flex h-[33px]">
        <div className="w-[95px] h-[33px] flex items-center justify-center border-t border-l border-r border-[#9fabc0] text-[#2c3a4f]">Risk Chart</div>
        <div className={`w-[98px] ${tab}`}>Price Chart</div>
        <div className={`w-[154px] ${tab}`}>Movement Analysis</div>
        <div className={`w-[79px] ${tab}`}>Volatility</div>
        <div className={`w-[195px] ${tab}`}>Statistics & Fundamentals</div>
        <div className="flex-1 border-b border-[#9fabc0]" />
      </div>
      <div className="flex-1 flex flex-col min-h-0 border-l border-r border-[#9fabc0]">
        <div className="h-[31px] flex items-center pl-[7px] pr-[8px] text-[#2c3a4f]">
          <span className="w-[71px]">Vol Adjust</span>
          <div className="w-[65px] h-[24px] bg-white border border-[#9da9bb] flex items-center justify-end pr-[5px] text-[#1f2937]">
            0
            <div className="ml-[10px] flex flex-col gap-[6px]">
              <svg width="8" height="4" viewBox="0 0 8 4"><polygon points="4,0 8,4 0,4" fill="#6d7a8f" /></svg>
              <svg width="8" height="4" viewBox="0 0 8 4"><polygon points="0,0 8,0 4,4" fill="#6d7a8f" /></svg>
            </div>
          </div>
          <span className="ml-auto mr-[6px]">Projection</span>
          <div className="w-[225px] h-[25px] bg-white border border-[#9da9bb] flex items-center pl-[3px] text-[#1f2937]">
            <span className="w-[97px]">29/05/2025</span>
            {caret}
            <span className="ml-[16px]">T+0</span>
            <span className="ml-[9px]">2Ln</span>
            <svg className="ml-[11px]" width="5" height="8" viewBox="0 0 5 8"><polygon points="5,0 5,8 0,4" fill="#1f2937" /></svg>
            <svg className="ml-[14px]" width="5" height="8" viewBox="0 0 5 8"><polygon points="0,0 0,8 5,4" fill="#1f2937" /></svg>
          </div>
        </div>
        <RiskChart />
        <div className="flex-1 bg-[#293754] flex items-center justify-end pr-[10px] text-[#f1f4fa]">
          <span className="mr-[13px] text-[15px]">420%</span>
          <svg width="160" height="14" viewBox="0 0 160 14">
            <path d="M1 7h7" stroke="#cdd5e3" />
            <path d="M13 7h132" stroke="#f4efc4" />
            <path d="M78 3v8" stroke="#f4efc4" />
            <rect x="126.500" y="3" width="3.500" height="9" fill="#f4efc4" />
            <path d="M151 7h7M154.500 3.500v7" stroke="#cdd5e3" />
          </svg>
        </div>
      </div>
    </div>
  );
}

function LeftPane() {
  return (
    <div className="w-[953px] flex flex-col">
      <div className="h-[37px] flex items-center pl-[9px] text-[#2c3a4f] whitespace-nowrap">
        <span className="w-[58px]">Symbol</span>
        <Combo className="w-[81px] h-[24px]" text="SPX" />
        <span className="ml-[11px] w-[124px]">Open Position (1)</span>
        <Combo className="w-[211px] h-[22px]" text="#378 Custom" />
        <svg className="ml-[214px]" width="18" height="19" viewBox="0 0 18 19">
          <rect x="0.5" y="0.5" width="14" height="16" fill="#f4f7fc" stroke="#a3b2d0" />
          <circle cx="10" cy="11" r="7" fill="#8cc75a" stroke="#5e9a35" />
          <path d="M10 7v8M6 11h8" stroke="#fff" strokeWidth="1.800" />
        </svg>
        <span className="ml-[4px]">Commit</span>
        <svg className="ml-[27px]" width="20" height="20" viewBox="0 0 20 20">
          <circle cx="8" cy="8" r="6.500" fill="#c7def7" stroke="#5d8ac8" strokeWidth="1.500" />
          <path d="M13 13l6 6" stroke="#d99b4e" strokeWidth="3" />
        </svg>
        <svg className="ml-[12px]" width="19" height="18" viewBox="0 0 19 18">
          <rect x="0.5" y="2" width="9" height="13" fill="#a4cf6a" stroke="#5f9433" />
          <path d="M5 6v5M2.500 8.500h5" stroke="#fff" />
          <rect x="11" y="0.5" width="7.500" height="16" fill="#eef2f9" stroke="#7f8da5" />
          <path d="M11 5h7M11 9h7M11 13h7" stroke="#7f8da5" />
        </svg>
        <svg className="ml-[13px]" width="19" height="19" viewBox="0 0 19 19">
          <circle cx="9.500" cy="9.500" r="9" fill="#d83a3a" stroke="#b02a2a" />
          <path d="M6 6l7 7M13 6l-7 7" stroke="#fff" strokeWidth="2.800" />
        </svg>
        <Settings className="ml-[30px]" size={18} color="#7f8794" fill="#c7ccd4" strokeWidth={2} />
      </div>
      <QuoteStrip />
      <Splitter className="h-[15px]" />
      <ChainTable
        dates
        head="CALLS"
        strikes={callStrikes}
        rowsA={callsA}
        rowsB={callsB}
        bar={<ScrollBar top="pt-[7px]" thumbTop="mt-[31px]" thumbGap="mt-[60px]" />}
      />
      <Splitter className="h-[15px]" />
      <ChainTable
        head="PUTS"
        strikes={putStrikes}
        rowsA={putsA}
        rowsB={putsB}
        bar={<ScrollBar top="pt-[8px]" thumbTop="mt-[122px]" thumbGap="mt-[156px]" />}
      />
      <Splitter className="h-[16px]" />
      <TradeAnalysis />
    </div>
  );
}

export default function App() {
  return (
    <div className="relative w-[1918px] h-[1014px] overflow-hidden bg-[#d4dbe9] flex flex-col text-[14px] leading-[20px] font-['Noto_Sans',sans-serif]">
      <TitleBar />
      <div className="ml-[8px] border-l border-[#aebacc]">
        <TabStrip />
        <Ribbon />
      </div>
      <div className="flex-1 min-h-0 flex">
        <div className="w-[8px] border-l-2 border-[#33383f] bg-[#c4ccd9]" />
        <div className="flex-1 min-w-0 mr-[5px] bg-[#293754] pt-[3px] pl-[5px] pr-[3px] flex flex-col">
          <div className="h-[32px] shrink-0 flex items-center bg-[#9aa6b7] border-b-2 border-[#c3ccdb] pl-[5px] pr-[8px] pt-[3px] text-[#d3dae6]">
            <span>Analysis: SPX</span>
            <span className="ml-auto">Account: Estrategia Sentimiento de Mercado</span>
            <span className="ml-[11px] w-[11px] h-[11px] rounded-full bg-[#5c6068] border-2 border-[#111]" />
            <span className="ml-[14px] w-[9px] h-[9px] border border-[#e4e9f1]" />
            <span className="ml-[12px]">x</span>
          </div>
          <div className="h-[778px] shrink-0 flex bg-[#d4dbe9] pl-[1px]">
            <LeftPane />
            <div className="w-[7px] flex items-center justify-center">
              <Dots vertical />
            </div>
            <RightPane />
          </div>
          <div className="h-[4px] shrink-0 bg-[#b7c1d3]" />
          <div className="flex-1 flex text-[#cdd6e6] pl-[1px]">
            <div className="w-[95px] pt-[1px] flex items-center justify-center">Analysis: /ES</div>
            <div className="w-[101px] pt-[1px] flex items-center justify-center bg-[#cdd5e3] text-[#26344a]">Analysis: SPX</div>
            <div className="w-[93px] pt-[1px] flex items-center justify-center border-r border-[#4a5a78]">Analysis: VIX</div>
          </div>
        </div>
      </div>
    </div>
  );
}
